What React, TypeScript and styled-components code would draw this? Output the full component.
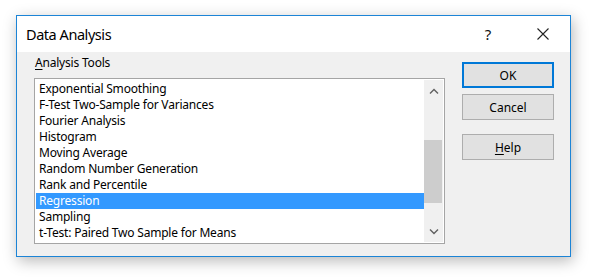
import React from "react";
import styled, { createGlobalStyle } from "styled-components";

const Global = createGlobalStyle`
  html, body { margin: 0; padding: 0; background: #ffffff; }
  body { font-family: "Noto Sans", "Open Sans", sans-serif; }
`;

const Page = styled.div`
  padding: 15px 0 0 16px;
  width: 591px;
  height: 278px;
  box-sizing: border-box;
`;

const Window = styled.div`
  width: 555px;
  height: 242px;
  box-sizing: border-box;
  border: 1px solid #1c84d6;
  box-shadow: 2px 4px 14px rgba(0, 0, 0, 0.28);
  display: flex;
  flex-direction: column;
  background: #f0f0f0;
`;

const TitleBar = styled.div`
  height: 36px;
  background: #ffffff;
  display: flex;
  align-items: center;
  padding-left: 9px;
  padding-right: 4px;
  flex-shrink: 0;
`;

const Title = styled.div`
  flex: 1;
  font-size: 14.5px;
  letter-spacing: -0.45px;
  color: #000;
  padding-bottom: 1px;
`;

const TitleButton = styled.div<{ $w: number }>`
  width: ${(p) => p.$w}px;
  height: 36px;
  display: flex;
  align-items: center;
  justify-content: center;
  font-size: 15px;
  color: #111;
`;

const Body = styled.div`
  flex: 1;
  display: flex;
  padding: 3px 15px 0 17px;
  gap: 17px;
`;

const LeftCol = styled.div`
  display: flex;
  flex-direction: column;
`;

const Label = styled.div`
  font-size: 12px;
  letter-spacing: -0.2px;
  line-height: 16px;
  height: 16px;
  margin-bottom: 7px;
  padding-left: 1px;
  color: #000;
`;

const Listbox = styled.div`
  width: 411px;
  height: 166px;
  box-sizing: border-box;
  border: 1px solid #a5a5a5;
  background: #fff;
  padding: 1px;
  display: flex;
`;

const Items = styled.div`
  flex: 1;
  padding-top: 1px;
`;

const Item = styled.div<{ $sel?: boolean }>`
  height: 16px;
  line-height: 16px;
  font-size: 12px;
  letter-spacing: -0.2px;
  padding-left: 3px;
  white-space: nowrap;
  color: ${(p) => (p.$sel ? "#fff" : "#000")};
  background: ${(p) => (p.$sel ? "#3399ff" : "transparent")};
`;

const Scrollbar = styled.div`
  width: 19px;
  background: #f0f0f0;
  display: flex;
  flex-direction: column;
`;

const ArrowBox = styled.div`
  height: 21px;
  display: flex;
  align-items: center;
  justify-content: center;
`;

const Track = styled.div`
  flex: 1;
  display: flex;
  flex-direction: column;
`;

const Thumb = styled.div`
  width: 18px;
  background: #cdcdcd;
`;

const RightCol = styled.div`
  display: flex;
  flex-direction: column;
  padding-top: 7px;
`;

const Button = styled.div<{ $default?: boolean; $gap?: number }>`
  width: 92px;
  height: 26px;
  box-sizing: border-box;
  background: #e1e1e1;
  border: ${(p) => (p.$default ? "2px solid #0078d7" : "1px solid #adadad")};
  display: flex;
  align-items: center;
  justify-content: center;
  font-size: 12px;
  color: #000;
  margin-bottom: ${(p) => p.$gap ?? 0}px;
`;

const U = styled.span`
  text-decoration: underline;
  text-underline-offset: 2px;
`;

const items = [
  "Exponential Smoothing",
  "F-Test Two-Sample for Variances",
  "Fourier Analysis",
  "Histogram",
  "Moving Average",
  "Random Number Generation",
  "Rank and Percentile",
  "Regression",
  "Sampling",
  "t-Test: Paired Two Sample for Means",
];

const Chevron = ({ up }: { up?: boolean }) => (
  <svg width="10" height="6" viewBox="0 0 10 6">
    <path
      d={up ? "M1 5.5 L5 1.5 L9 5.5" : "M1 0.5 L5 4.5 L9 0.5"}
      fill="none"
      stroke="#606060"
      strokeWidth="1.4"
    />
  </svg>
);

const CloseIcon = () => (
  <svg width="12" height="12" viewBox="0 0 12 12">
    <path d="M0.5 0.5 L11.5 11.5 M11.5 0.5 L0.5 11.5" stroke="#222" strokeWidth="1.1" fill="none" />
  </svg>
);

export default function App() {
  return (
    <>
      <Global />
      <Page>
        <Window>
          <TitleBar>
            <Title>Data Analysis</Title>
            <TitleButton $w={64}>?</TitleButton>
            <TitleButton $w={46}>
              <CloseIcon />
            </TitleButton>
          </TitleBar>
          <Body>
            <LeftCol>
              <Label>
                <U>A</U>nalysis Tools
              </Label>
              <Listbox>
                <Items>
                  {items.map((t) => (
                    <Item key={t} $sel={t === "Regression"}>
                      {t}
                    </Item>
                  ))}
                </Items>
                <Scrollbar>
                  <ArrowBox>
                    <Chevron up />
                  </ArrowBox>
                  <Track>
                    <div style={{ height: 39 }} />
                    <Thumb style={{ height: 63 }} />
                  </Track>
                  <ArrowBox>
                    <Chevron />
                  </ArrowBox>
                </Scrollbar>
              </Listbox>
            </LeftCol>
            <RightCol>
              <Button $default $gap={6}>OK</Button>
              <Button $gap={14}>Cancel</Button>
              <Button>
                <U>H</U>elp
              </Button>
            </RightCol>
          </Body>
        </Window>
      </Page>
    </>
  );
}
